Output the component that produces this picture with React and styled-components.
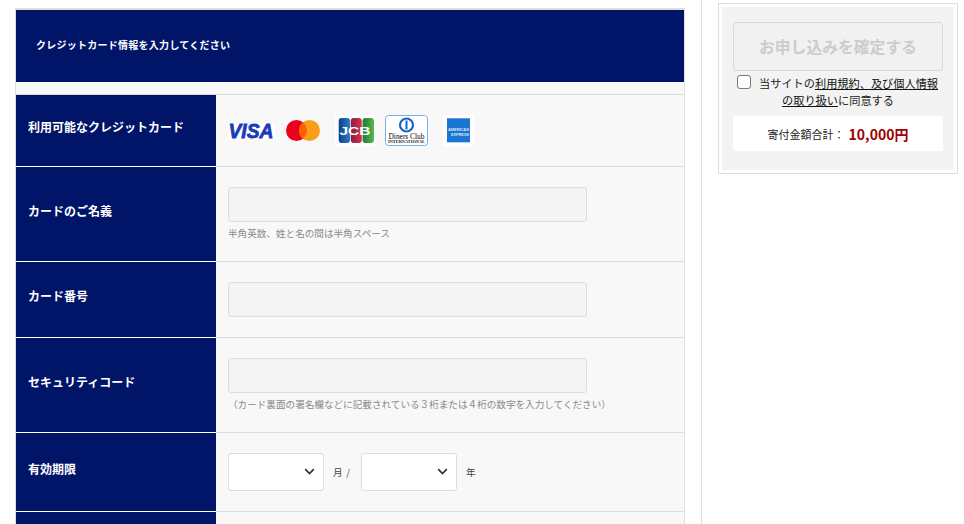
import React from "react";
import styled, { createGlobalStyle } from "styled-components";

const FONT = `"Noto Sans CJK JP", "Noto Sans", sans-serif`;
const NAVY = "#001468";

const Global = createGlobalStyle`
  html, body { margin: 0; padding: 0; background: #fff; height: 524px; overflow: hidden; }
  body { font-family: ${FONT}; color: #222; }
  * { box-sizing: border-box; }
`;

const Page = styled.div`
  display: flex;
  height: 524px;
  overflow: hidden;
`;
const Main = styled.main`
  width: 702px;
  flex: none;
  padding: 8px 16px 0 15px;
  border-right: 1px solid #ddd;
`;
const Table = styled.section`
  border: 1px solid #ddd;
  border-top-width: 2px;
  border-bottom: 0;
  background: #f8f8f8;
`;
const Title = styled.h2`
  margin: 0 0 12px;
  height: 72px;
  padding: 0 20px 2px;
  display: flex;
  align-items: center;
  background: ${NAVY};
  color: #fff;
  font-size: 10px;
  letter-spacing: 0.26px;
  line-height: 14px;
  font-weight: 700;
`;
const Row = styled.div`
  display: grid;
  grid-template-columns: 200px 1fr;
  min-height: ${(p) => p.$min || 0}px;
`;
const Label = styled.div`
  display: flex;
  align-items: center;
  padding: 0 12px 7px;
  background: ${NAVY};
  color: #fff;
  font-size: 12px;
  line-height: 16px;
  font-weight: 700;
  border-top: 1px solid ${(p) => (p.$first ? "#ddd" : "#fff")};
`;
const Cell = styled.div`
  padding: 20px 12px 20px;
  border-top: 1px solid #ddd;
`;
const Logos = styled.div`
  display: flex;
  gap: 10px;
  height: 31px;
  align-items: center;
`;
const TextBox = styled.input`
  display: block;
  width: 359px;
  height: 35px;
  background: #f4f4f4;
  border: 1px solid #ddd;
  border-radius: 3px;
  padding: 0 8px;
  outline: none;
`;
const Note = styled.p`
  margin: 4px 0 0;
  height: 15px;
  font-size: 9.6px;
  line-height: 15px;
  color: #888;
  white-space: nowrap;
`;
const Expiry = styled.div`
  display: flex;
  align-items: center;
`;
const SelectWrap = styled.div`
  position: relative;
  width: 96px;
  height: 38px;
`;
const Select = styled.select`
  appearance: none;
  width: 100%;
  height: 100%;
  display: block;
  background: #fff;
  border: 1px solid #ddd;
  border-radius: 3px;
`;
const Chevron = styled.svg`
  position: absolute;
  right: 9px;
  top: 14px;
  width: 11px;
  height: 9px;
  pointer-events: none;
`;
const Unit = styled.span`
  font-size: 9.6px;
  line-height: 16px;
  color: #444;
  width: ${(p) => p.$width}px;
  padding-left: 9px;
  word-spacing: 1.5px;
  white-space: pre;
`;

const Side = styled.aside`
  padding: 3px 0 0 16px;
`;
const Box = styled.div`
  width: 240px;
  height: 171px;
  border: 1px solid #ddd;
  padding: 3px;
`;
const BoxInner = styled.div`
  height: 100%;
  background: #f3f3f3;
  padding: 15px 11px 0;
`;
const Confirm = styled.button`
  display: block;
  width: 100%;
  height: 49px;
  background: #f1f1f1;
  border: 1px solid #d8d8d8;
  border-radius: 3px;
  color: #ccc;
  font-family: ${FONT};
  font-size: 15.8px;
  font-weight: 700;
  line-height: 20px;
  padding: 0;
`;
const Agree = styled.label`
  display: block;
  margin-top: 4px;
  text-align: center;
  font-size: 11.2px;
  line-height: 16.5px;
  color: #222;
`;
const Check = styled.input`
  appearance: none;
  display: inline-block;
  width: 14px;
  height: 14px;
  margin: -2px 7.5px 0 -0.5px;
  vertical-align: -1px;
  background: #fff;
  border: 1px solid #777;
  border-radius: 3px;
`;
const Terms = styled.a`
  color: #111;
  text-decoration: underline;
`;
const Total = styled.div`
  margin-top: 8px;
  height: 35px;
  background: #fff;
  display: flex;
  align-items: center;
  justify-content: center;
  font-size: 11px;
  line-height: 16px;
`;
const Amount = styled.strong`
  color: #a00000;
  font-size: 14px;
  line-height: 18px;
  margin-left: 4px;
`;

const Visa = () => (
  <svg width="47" height="26" viewBox="0 -5 47 26">
    <rect width="47" height="16" fill="#fff" />
    <text x="0.5" y="15" fontFamily="Liberation Sans, sans-serif" fontWeight="700" fontStyle="italic" fontSize="20.5" fill="#1a3bb8" stroke="#1a3bb8" strokeWidth=".8" textLength="45" lengthAdjust="spacingAndGlyphs">VISA</text>
  </svg>
);
const Master = () => (
  <svg width="40" height="21" viewBox="0 0 40 21">
    <circle cx="11.5" cy="10.5" r="10.5" fill="#eb001b" />
    <circle cx="24.5" cy="10.5" r="10.5" fill="#f79e1b" />
    <path d="M18 2.3a10.5 10.5 0 0 1 0 16.4a10.5 10.5 0 0 1 0-16.4z" fill="#ff5f00" />
  </svg>
);
const Jcb = () => (
  <svg width="40" height="31" viewBox="0 0 40 31">
    <defs>
      <linearGradient id="jb" x1="0" x2="1" y1="0" y2="0">
        <stop offset="0" stopColor="#0c3f8c" />
        <stop offset="1" stopColor="#2d7fc2" />
      </linearGradient>
      <linearGradient id="jr" x1="0" x2="1" y1="0" y2="0">
        <stop offset="0" stopColor="#8b1c3c" />
        <stop offset="1" stopColor="#d8324e" />
      </linearGradient>
      <linearGradient id="jg" x1="0" x2="1" y1="0" y2="0">
        <stop offset="0" stopColor="#1c7a3a" />
        <stop offset="1" stopColor="#5cb848" />
      </linearGradient>
    </defs>
    <rect width="40" height="31" fill="#fff" />
    <rect x="3.7" y="3" width="11.4" height="25" rx="3" fill="url(#jb)" />
    <rect x="15.8" y="3" width="11" height="25" rx="3" fill="url(#jr)" />
    <rect x="27.6" y="3" width="11.4" height="25" rx="3" fill="url(#jg)" />
    <text x="4.5" y="19.5" fontFamily="Liberation Sans, sans-serif" fontWeight="700" fontSize="11" fill="#fff" textLength="31" lengthAdjust="spacingAndGlyphs">JCB</text>
  </svg>
);
const Diners = () => (
  <svg width="43" height="31" viewBox="0 0 43 31">
    <rect x=".5" y=".5" width="42" height="30" rx="3" fill="#fff" stroke="#7ab0e6" />
    <circle cx="21.5" cy="10" r="6.5" fill="#fff" stroke="#1769c2" strokeWidth="2.2" />
    <path d="M21.5 5.5v9" stroke="#1769c2" strokeWidth="2" />
    <text x="3.5" y="23.6" fontFamily="Liberation Serif, serif" fontSize="7.6" fill="#333" stroke="#333" strokeWidth=".12" textLength="36" lengthAdjust="spacingAndGlyphs">Diners Club</text>
    <text x="3" y="28" fontFamily="Liberation Serif, serif" fontWeight="700" fontSize="3.6" fill="#222" textLength="37" lengthAdjust="spacingAndGlyphs">INTERNATIONAL</text>
  </svg>
);
const Amex = () => (
  <svg width="36" height="31" viewBox="0 0 36 31">
    <rect x="5" width="31" height="31" fill="#fff" />
    <rect x="9" y="3.3" width="23" height="24" fill="#1a74d2" />
    <text x="10" y="15.8" fontFamily="Liberation Sans, sans-serif" fontWeight="700" fontSize="4" fill="#dbe9f8" textLength="21" lengthAdjust="spacingAndGlyphs">AMERICAN</text>
    <text x="13" y="20.8" fontFamily="Liberation Sans, sans-serif" fontWeight="700" fontSize="4" fill="#dbe9f8" textLength="18" lengthAdjust="spacingAndGlyphs">EXPRESS</text>
  </svg>
);
const Down = () => (
  <Chevron viewBox="0 0 11 9">
    <path d="M1.2 2.2 5.5 6.5 9.8 2.2" fill="none" stroke="#333" strokeWidth="1.7" />
  </Chevron>
);

export default function App() {
  return (
    <>
      <Global />
      <Page>
        <Main>
          <Table>
            <Title>クレジットカード情報を入力してください</Title>
            <Row>
              <Label $first>利用可能なクレジットカード</Label>
              <Cell>
                <Logos>
                  <Visa />
                  <Master />
                  <Jcb />
                  <Diners />
                  <Amex />
                </Logos>
              </Cell>
            </Row>
            <Row>
              <Label>カードのご名義</Label>
              <Cell>
                <TextBox disabled />
                <Note>半角英数、姓と名の間は半角スペース</Note>
              </Cell>
            </Row>
            <Row>
              <Label>カード番号</Label>
              <Cell>
                <TextBox disabled />
              </Cell>
            </Row>
            <Row>
              <Label>セキュリティコード</Label>
              <Cell>
                <TextBox disabled />
                <Note>（カード裏面の署名欄などに記載されている３桁または４桁の数字を入力してください）</Note>
              </Cell>
            </Row>
            <Row>
              <Label>有効期限</Label>
              <Cell>
                <Expiry>
                  <SelectWrap>
                    <Select aria-label="月" />
                    <Down />
                  </SelectWrap>
                  <Unit $width={37}>月 /</Unit>
                  <SelectWrap>
                    <Select aria-label="年" />
                    <Down />
                  </SelectWrap>
                  <Unit $width={24}>年</Unit>
                </Expiry>
              </Cell>
            </Row>
            <Row $min={40}>
              <Label />
              <Cell />
            </Row>
          </Table>
        </Main>
        <Side>
          <Box>
            <BoxInner>
              <Confirm disabled>お申し込みを確定する</Confirm>
              <Agree>
                <Check type="checkbox" />
                当サイトの<Terms>利用規約、及び個人情報の取り扱い</Terms>に同意する
              </Agree>
              <Total>
                寄付金額合計：<Amount>10,000円</Amount>
              </Total>
            </BoxInner>
          </Box>
        </Side>
      </Page>
    </>
  );
}
